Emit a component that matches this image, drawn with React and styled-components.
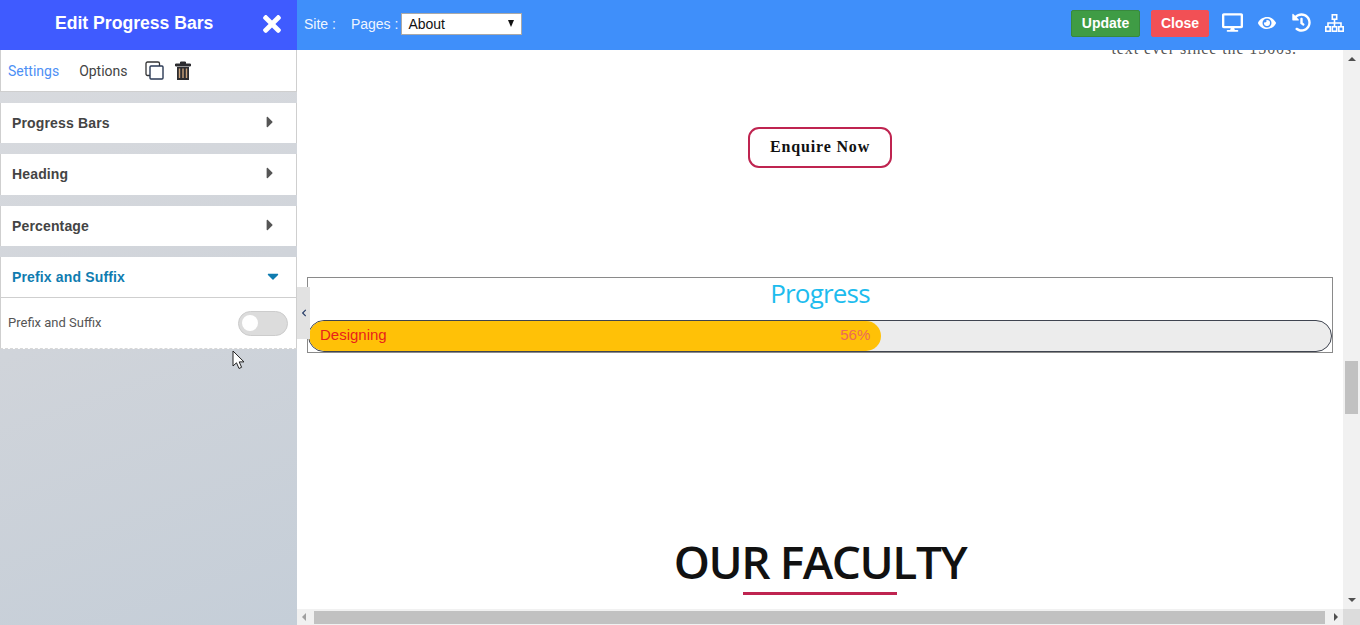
import styled, { createGlobalStyle } from "styled-components";
import { FaTimes, FaDesktop, FaEye, FaHistory, FaCaretRight, FaCaretDown, FaChevronLeft } from "react-icons/fa";

const GlobalStyle = createGlobalStyle`
  html, body {
    margin: 0;
    height: 100%;
    overflow: hidden;
    background: #fff;
    font-family: "Liberation Sans", Arial, sans-serif;
  }
  #root {
    height: 100%;
  }
`;

const Page = styled.div`
  position: relative;
  width: 1360px;
  height: 625px;
  overflow: hidden;
  display: flex;
  flex-direction: column;
`;

const TopBar = styled.header`
  height: 50px;
  flex: none;
  display: flex;
  background: #3f8ffa;
  color: #fff;
  position: relative;
  z-index: 2;
`;

const TitleBlock = styled.div`
  width: 297px;
  background: #3f5bff;
  display: flex;
  align-items: center;
  justify-content: space-between;
  padding: 0 14px 3px 55px;
  box-sizing: border-box;
`;

const Title = styled.h1`
  margin: 0;
  font: 700 17.6px "Liberation Sans", sans-serif;
`;

const CloseIcon = styled(FaTimes)`
  width: 22px;
  height: 26px;
  margin-top: 1px;
`;

const SiteTools = styled.div`
  display: flex;
  align-items: center;
  padding: 0 0 2px 7px;
  font: 14px "Liberation Sans", sans-serif;
  color: #eef5ff;
`;

const SitePart = styled.span`
  margin-right: 15px;
`;

const PagePart = styled.span`
  margin-right: 3px;
`;

const PageSelect = styled.div`
  width: 121px;
  height: 22px;
  box-sizing: border-box;
  border: 1px solid #a9a9a9;
  background: #fff;
  color: #111;
  padding-left: 6px;
  padding-right: 7px;
  display: flex;
  align-items: center;
  justify-content: space-between;
  font: 14px "Liberation Sans", sans-serif;

  &::after {
    content: "";
    border-left: 3.5px solid transparent;
    border-right: 3.5px solid transparent;
    border-top: 7px solid #111;
    margin-top: -2px;
  }
`;

const Actions = styled.div`
  margin-left: auto;
  display: flex;
  align-items: center;
  padding: 0 16px 5px 0;
`;

const ActionButton = styled.button`
  height: 27px;
  box-sizing: border-box;
  border: 1px solid ${(p) => p.$border};
  border-radius: 2px;
  background: ${(p) => p.$bg};
  color: #fff;
  font: 700 14px "Liberation Sans", sans-serif;
  padding: 0 0 2px;
  width: ${(p) => p.$width}px;
  margin-top: 2px;
  margin-right: ${(p) => p.$gap}px;
`;

const ToolIcon = styled.span`
  display: flex;
  color: #fff;
  font-size: ${(p) => p.$size}px;
  margin-right: ${(p) => p.$gap}px;
`;

const Body = styled.div`
  flex: 1;
  display: flex;
  min-height: 0;
`;

const Sidebar = styled.aside`
  width: 297px;
  flex: none;
  box-sizing: border-box;
  background: linear-gradient(160deg, #d9dbdf 0%, #d0d4da 45%, #c5ced8 100%);
`;

const Tabs = styled.div`
  height: 42px;
  background: #fff;
  border: solid #cfcfcf;
  border-width: 0 1px 1px 1px;
  box-sizing: border-box;
  display: flex;
  align-items: center;
  padding-left: 7px;
  font: 14px "Roboto", "Liberation Sans", sans-serif;
`;

const Tab = styled.span`
  color: ${(p) => (p.$active ? "#4d8ff5" : "#444")};
  margin-right: ${(p) => p.$gap}px;
`;

const TabIcon = styled.span`
  display: flex;
  margin-right: ${(p) => p.$gap}px;
`;

const Section = styled.div`
  margin-top: 11px;
  height: ${(p) => p.$height}px;
  box-sizing: border-box;
  background: #fff;
  border: solid #cfcfcf;
  border-width: 0 1px;
  display: flex;
  align-items: center;
  justify-content: space-between;
  padding: 0 ${(p) => (p.$open ? 14 : 17)}px ${(p) => p.$height - 40}px 11px;
  font: 700 14px "Liberation Sans", sans-serif;
  letter-spacing: 0.15px;
  color: ${(p) => (p.$open ? "#0f7cb0" : "#444")};
`;

const Caret = styled.span`
  display: flex;
  font-size: 18px;
  margin-top: -3px;
  color: ${(p) => (p.$open ? "#0f7cb0" : "#555")};
`;

const SectionBody = styled.div`
  height: 52px;
  box-sizing: border-box;
  background: #fff;
  border: solid #cfcfcf;
  border-width: 1px 1px 0;
  border-bottom: 1px dashed #d8d8d8;
  display: flex;
  align-items: center;
  justify-content: space-between;
  padding: 0 8px 0 7px;
  font: 13px "Roboto", "Liberation Sans", sans-serif;
  color: #555;
`;

const BodyLabel = styled.span`
  margin-top: -1px;
`;

const Toggle = styled.span`
  width: 50px;
  height: 25px;
  box-sizing: border-box;
  border: 1px solid #ccc;
  border-radius: 13px;
  background: #dcdcdc;
  display: flex;
  align-items: center;
  padding-left: 3px;

  &::before {
    content: "";
    width: 16px;
    height: 16px;
    border-radius: 50%;
    background: #fff;
  }
`;

const Preview = styled.main`
  flex: 1;
  display: grid;
  grid-template-columns: 1fr 17px;
  grid-template-rows: 1fr 16px;
  min-width: 0;
`;

const Viewport = styled.div`
  overflow: hidden;
  display: flex;
  flex-direction: column;
  align-items: center;
  padding: 0 10px;
`;

const IntroText = styled.div`
  align-self: flex-end;
  margin: -11px 36px 0 0;
  font: 16px/20px "Liberation Serif", serif;
  letter-spacing: 0.9px;
  color: #555;
  white-space: nowrap;
`;

const EnquireButton = styled.button`
  margin-top: 68px;
  width: 144px;
  height: 41px;
  border: 2px solid #bf2450;
  border-radius: 11px;
  background: #fff;
  color: #111;
  font: 700 16px "Liberation Serif", serif;
  letter-spacing: 0.85px;
  padding: 0 0 2px;
`;

const ProgressWidget = styled.section`
  margin-top: 109px;
  width: 1026px;
  height: 76px;
  box-sizing: border-box;
  border: 1px solid #8a8a8a;
`;

const ProgressHeading = styled.h2`
  margin: 0;
  height: 42px;
  font: 400 26px/31px "Open Sans", sans-serif;
  letter-spacing: -0.8px;
  text-align: center;
  color: #1dbcee;
`;

const Track = styled.div`
  height: 32px;
  box-sizing: border-box;
  border: 1px solid #3f4450;
  border-radius: 16px;
  background: #ececec;
  overflow: hidden;
`;

const Fill = styled.div`
  height: 100%;
  background: #ffc107;
  border-radius: 15px;
  display: flex;
  align-items: center;
  justify-content: space-between;
  padding: 0 11px 3px;
  box-sizing: border-box;
  font: 15px "Liberation Sans", sans-serif;
`;

const FillLabel = styled.span`
  color: #e8211b;
`;

const FillValue = styled.span`
  color: #ec6a5a;
`;

const FacultyHeading = styled.h2`
  margin: 178px 0 1px;
  font: 600 46px/60px "Open Sans", sans-serif;
  letter-spacing: -1.4px;
  color: #111;
  white-space: nowrap;
`;

const HeadingRule = styled.div`
  width: 154px;
  height: 3px;
  flex: none;
  background: #bf2450;
`;

const VerticalBar = styled.div`
  background: #f1f1f1;
  display: flex;
  flex-direction: column;
  align-items: center;
  padding-top: 7px;
`;

const VerticalThumb = styled.div`
  margin-top: 300px;
  width: 13px;
  height: 53px;
  background: #c1c1c1;
`;

const ArrowUp = styled.span`
  border-left: 4px solid transparent;
  border-right: 4px solid transparent;
  border-bottom: 4px solid #505050;
`;

const ArrowDown = styled.span`
  margin-top: auto;
  margin-bottom: 7px;
  border-left: 4px solid transparent;
  border-right: 4px solid transparent;
  border-top: 4px solid #505050;
`;

const HorizontalBar = styled.div`
  background: #f1f1f1;
  display: flex;
  align-items: center;
  padding: 0 5px;
`;

const HorizontalThumb = styled.div`
  margin-left: 8px;
  width: 1011px;
  height: 13px;
  background: #c1c1c1;
`;

const ArrowLeft = styled.span`
  border-top: 4px solid transparent;
  border-bottom: 4px solid transparent;
  border-right: 4px solid #a0a0a0;
`;

const ArrowRight = styled.span`
  margin-left: auto;
  border-top: 4px solid transparent;
  border-bottom: 4px solid transparent;
  border-left: 4px solid #505050;
`;

const Corner = styled.div`
  background: #dcdcdc;
`;

const CollapseHandle = styled.div`
  position: absolute;
  left: 297px;
  top: 287px;
  width: 13px;
  height: 52px;
  background: #e2e2e2;
  display: flex;
  align-items: center;
  justify-content: center;
  color: #2a3f6a;
  font-size: 8px;
`;

const Cursor = styled.svg`
  position: absolute;
  left: 232px;
  top: 350px;
`;

const sections = [
  { title: "Progress Bars", height: 40 },
  { title: "Heading", height: 41 },
  { title: "Percentage", height: 40 },
];

const CopyIcon = () => (
  <svg width="19" height="19" viewBox="0 0 19 19" fill="none">
    <path d="M5 14.5H2.5A1.5 1.5 0 0 1 1 13V2.5A1.5 1.5 0 0 1 2.5 1H13a1.5 1.5 0 0 1 1.5 1.5V5" stroke="#333" strokeWidth="1.3" />
    <rect x="5" y="5" width="13" height="13" rx="1" stroke="#2b3a55" strokeWidth="1.4" />
  </svg>
);

const TrashIcon = () => (
  <svg width="16" height="19" viewBox="0 0 16 19">
    <path d="M0.5 3h15v2h-15z M5.5 3V1h5v2" fill="#2c2c30" stroke="#2c2c30" strokeWidth="1" />
    <path d="M2 6h12v13H2z" fill="#2c2c30" />
    <path d="M4.5 7.5v9.5M8 7.5v9.5M11.5 7.5v9.5" stroke="#c9a27c" strokeWidth="1.4" />
  </svg>
);

const SitemapIcon = () => (
  <svg width="19" height="18" viewBox="0 0 19 18" fill="none" stroke="#fff" strokeWidth="1.6">
    <rect x="7.3" y="0.8" width="4.4" height="4.4" />
    <rect x="0.8" y="12.8" width="4.4" height="4.4" />
    <rect x="7.3" y="12.8" width="4.4" height="4.4" />
    <rect x="13.8" y="12.8" width="4.4" height="4.4" />
    <path d="M9.5 5.2v7.6M3 12.8V9h13v3.8" />
  </svg>
);

export default function App() {
  return (
    <Page>
      <GlobalStyle />
      <TopBar>
        <TitleBlock>
          <Title>Edit Progress Bars</Title>
          <CloseIcon />
        </TitleBlock>
        <SiteTools>
          <SitePart>Site :</SitePart>
          <PagePart>Pages :</PagePart>
          <PageSelect>About</PageSelect>
        </SiteTools>
        <Actions>
          <ActionButton $bg="#3f9c45" $border="#38893d" $width={69} $gap={11}>Update</ActionButton>
          <ActionButton $bg="#f25055" $border="#f25055" $width={58} $gap={13}>Close</ActionButton>
          <ToolIcon $size={21} $gap={15}><FaDesktop /></ToolIcon>
          <ToolIcon $size={18} $gap={16}><FaEye /></ToolIcon>
          <ToolIcon $size={19} $gap={14}><FaHistory /></ToolIcon>
          <ToolIcon $size={18} $gap={0}><SitemapIcon /></ToolIcon>
        </Actions>
      </TopBar>
      <Body>
        <Sidebar>
          <Tabs>
            <Tab $active $gap={20}>Settings</Tab>
            <Tab $gap={17}>Options</Tab>
            <TabIcon $gap={11}><CopyIcon /></TabIcon>
            <TabIcon $gap={0}><TrashIcon /></TabIcon>
          </Tabs>
          {sections.map((s) => (
            <Section key={s.title} $height={s.height}>
              {s.title}
              <Caret><FaCaretRight /></Caret>
            </Section>
          ))}
          <Section $open $height={40}>
            Prefix and Suffix
            <Caret $open><FaCaretDown /></Caret>
          </Section>
          <SectionBody>
            <BodyLabel>Prefix and Suffix</BodyLabel>
            <Toggle />
          </SectionBody>
        </Sidebar>
        <Preview>
          <Viewport>
            <IntroText>text ever since the 1500s.</IntroText>
            <EnquireButton>Enquire Now</EnquireButton>
            <ProgressWidget>
              <ProgressHeading>Progress</ProgressHeading>
              <Track>
                <Fill style={{ width: "56%" }}>
                  <FillLabel>Designing</FillLabel>
                  <FillValue>56%</FillValue>
                </Fill>
              </Track>
            </ProgressWidget>
            <FacultyHeading>OUR FACULTY</FacultyHeading>
            <HeadingRule />
          </Viewport>
          <VerticalBar>
            <ArrowUp />
            <VerticalThumb />
            <ArrowDown />
          </VerticalBar>
          <HorizontalBar>
            <ArrowLeft />
            <HorizontalThumb />
            <ArrowRight />
          </HorizontalBar>
          <Corner />
        </Preview>
      </Body>
      <CollapseHandle><FaChevronLeft /></CollapseHandle>
      <Cursor width="14" height="21" viewBox="0 0 14 21">
        <path d="M1 1v15l3.5-3.2L7 18.5l2.6-1.2-2.4-5.4H12z" fill="#fff" stroke="#222" strokeWidth="1" />
      </Cursor>
    </Page>
  );
}
